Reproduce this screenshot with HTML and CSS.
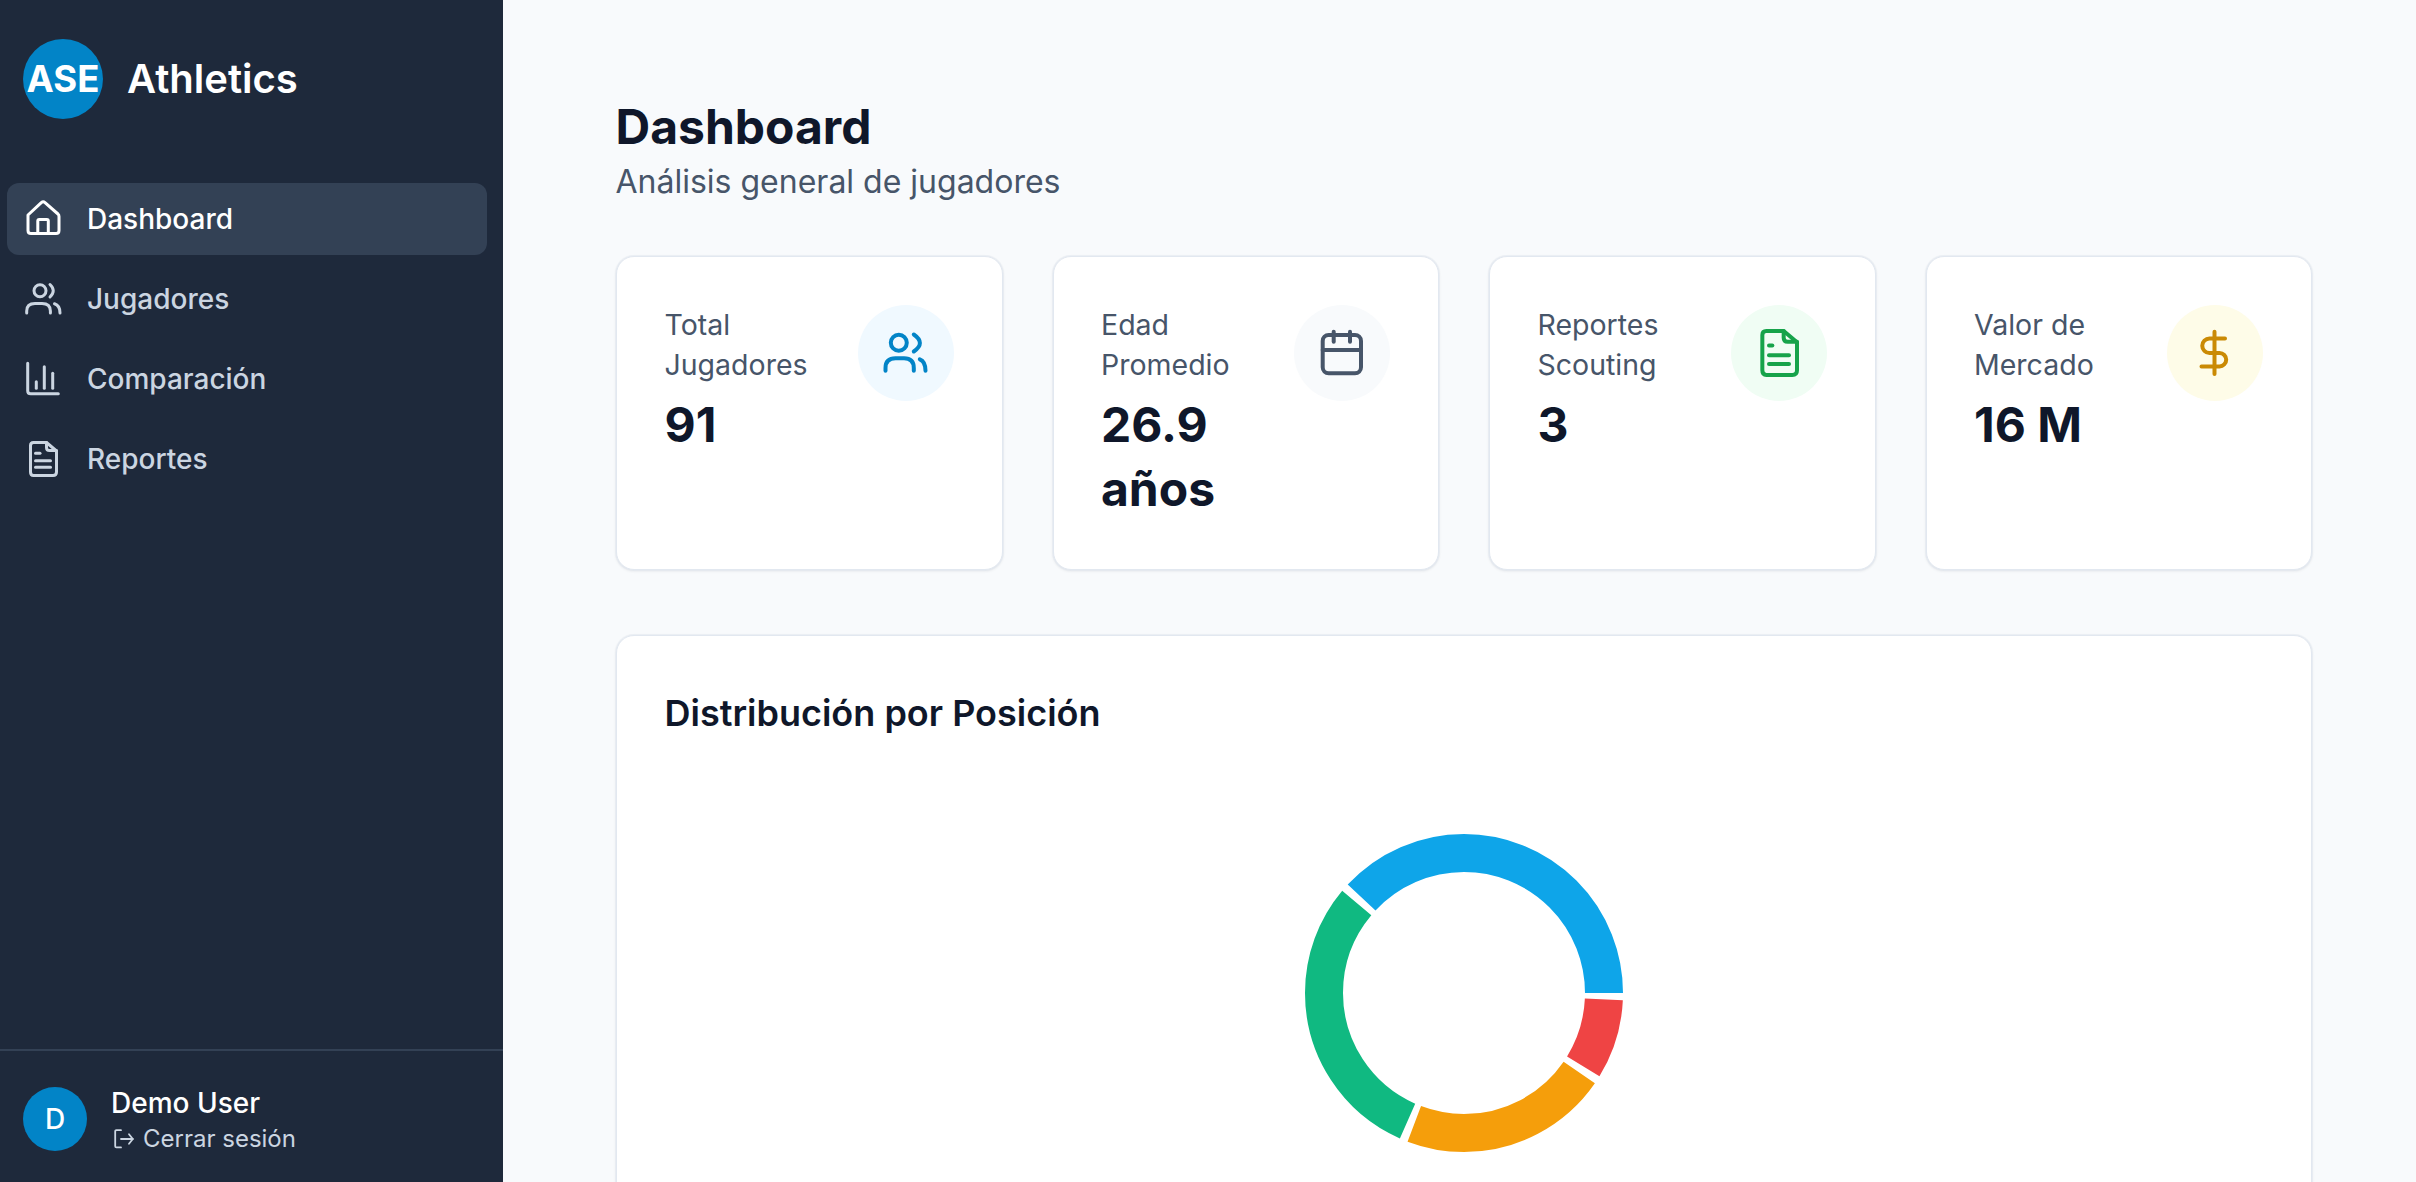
FILE: index.html
```html
<!DOCTYPE html>
<html lang="es">
<head>
<meta charset="utf-8">
<title>ASE Athletics</title>
<link rel="stylesheet" href="styles.css">
</head>
<body>
<div class="app">
  <aside class="sidebar">
    <div class="brand">
      <div class="brand-logo">ASE</div>
      <div class="brand-name">Athletics</div>
    </div>
    <nav class="nav">
      <a class="nav-item active">
        <svg class="nav-icon" viewBox="0 0 36 36"><path d="M3 14 L16.3 1.6 Q18.2 0 20 1.6 L33 13 Q34 14 34 15.5 V29.5 Q34 32.5 31 32.5 H6 Q3 32.5 3 29.5 Z"/><path d="M12.8 32.5 V20 Q12.8 18.5 14.3 18.5 H21.8 Q23.3 18.5 23.3 20 V32.5"/></svg>
        <span>Dashboard</span>
      </a>
      <a class="nav-item">
        <svg class="nav-icon" viewBox="0 0 36 36"><circle cx="15" cy="9.7" r="6"/><path d="M25 3.5 Q31.5 9.7 25 16"/><path d="M1.7 32 V30 Q1.7 22.5 10 22.5 H17 Q25.4 22.5 25.4 30 V32"/><path d="M29.5 22.8 Q35 24.5 35 32"/></svg>
        <span>Jugadores</span>
      </a>
      <a class="nav-item">
        <svg class="nav-icon" viewBox="0 0 36 36"><path d="M2.7 2.3 V29.7 Q2.7 32.7 5.7 32.7 H33.3"/><path d="M11.3 20.7 V27.3"/><path d="M19.3 5.7 V27.3"/><path d="M27.7 12.3 V27.3"/></svg>
        <span>Comparación</span>
      </a>
      <a class="nav-item">
        <svg class="nav-icon" viewBox="0 0 36 36"><path d="M8.5 1.5 H21.5 L31.5 10 V31 Q31.5 34.5 28 34.5 H8.5 Q5.5 34.5 5.5 31 V4.5 Q5.5 1.5 8.5 1.5 Z"/><path d="M21.5 1.5 V6.5 Q21.5 9.5 24.5 9.5 H31.5"/><path d="M10.5 12.3 H15"/><path d="M10.5 19.7 H25.5"/><path d="M10.5 26.3 H25.5"/></svg>
        <span>Reportes</span>
      </a>
    </nav>
    <div class="user">
      <div class="user-avatar">D</div>
      <div class="user-info">
        <div class="user-name">Demo User</div>
        <a class="logout">
          <svg class="logout-icon" viewBox="0 0 24 24"><path d="M10 3.2 H5.4 Q4.2 3.2 4.2 4.4 V19.2 Q4.2 20.4 5.4 20.4 H10"/><path d="M10 12 H21.8"/><path d="M18 7.2 L21.8 12 L18 16.8"/></svg>
          <span>Cerrar sesión</span>
        </a>
      </div>
    </div>
  </aside>
  <main class="main">
    <header class="page-head">
      <h1 class="page-title">Dashboard</h1>
      <p class="page-sub">Análisis general de jugadores</p>
    </header>
    <section class="stats">
      <article class="stat">
        <div class="stat-text">
          <div class="stat-label">Total Jugadores</div>
          <div class="stat-value">91</div>
        </div>
        <div class="stat-icon tone-blue">
          <svg viewBox="0 0 48 48"><circle cx="16.8" cy="13.7" r="8"/><path d="M31.8 5.5 Q44 14 31.8 22.5"/><path d="M3.5 41.7 V39 Q3.5 29.3 13.5 29.3 H22 Q31.8 29.3 31.8 39 V41.7"/><path d="M37.8 30.3 Q43.5 32.5 43.5 41.7"/></svg>
        </div>
      </article>
      <article class="stat">
        <div class="stat-text">
          <div class="stat-label">Edad Promedio</div>
          <div class="stat-value">26.9 años</div>
        </div>
        <div class="stat-icon tone-slate">
          <svg viewBox="0 0 48 48"><rect x="4.7" y="6" width="38.3" height="38.3" rx="6"/><path d="M4.7 21 H43"/><path d="M15.7 2.7 V12.7"/><path d="M32 2.7 V12.7"/></svg>
        </div>
      </article>
      <article class="stat">
        <div class="stat-text">
          <div class="stat-label">Reportes Scouting</div>
          <div class="stat-value">3</div>
        </div>
        <div class="stat-icon tone-green">
          <svg class="icon-doc" viewBox="0 0 36 36"><path d="M8.5 1.5 H21.5 L31.5 10 V31 Q31.5 34.5 28 34.5 H8.5 Q5.5 34.5 5.5 31 V4.5 Q5.5 1.5 8.5 1.5 Z"/><path d="M21.5 1.5 V6.5 Q21.5 9.5 24.5 9.5 H31.5"/><path d="M10.5 12.3 H13"/><path d="M10.5 19.7 H25.5"/><path d="M10.5 26.3 H25.5"/></svg>
        </div>
      </article>
      <article class="stat">
        <div class="stat-text">
          <div class="stat-label">Valor de Mercado</div>
          <div class="stat-value">16 M</div>
        </div>
        <div class="stat-icon tone-amber">
          <svg viewBox="0 0 48 48"><path d="M23.5 2.7 V45"/><path d="M34 9.5 H18.5 A7.2 7.2 0 0 0 18.5 24 H28.5 A6.7 6.7 0 0 1 28.5 37.4 H10.5"/></svg>
        </div>
      </article>
    </section>
    <section class="chart-card">
      <h2 class="chart-title">Distribución por Posición</h2>
      <svg class="donut" viewBox="0 0 320 320">
        <circle class="seg seg-blue" cx="160" cy="160" r="140" pathLength="360" stroke-dasharray="137 360" stroke-dashoffset="-223"/>
        <circle class="seg seg-green" cx="160" cy="160" r="140" pathLength="360" stroke-dasharray="106.2 360" stroke-dashoffset="-113.8"/>
        <circle class="seg seg-amber" cx="160" cy="160" r="140" pathLength="360" stroke-dasharray="76.2 360" stroke-dashoffset="-34.6"/>
        <circle class="seg seg-red" cx="160" cy="160" r="140" pathLength="360" stroke-dasharray="29 360" stroke-dashoffset="-2.6"/>
      </svg>
    </section>
  </main>
</div>
</body>
</html>
```

FILE: styles.css
```css
* { box-sizing: border-box; }
html, body { margin: 0; height: 100%; }
body {
  font-family: Inter, "Liberation Sans", sans-serif;
  background: #f8fafc;
  color: #0f172a;
  overflow: hidden;
}
.app { display: flex; height: 1182px; overflow: hidden; }

/* Sidebar */
.sidebar {
  width: 503px;
  flex: none;
  background: #1e293b;
  display: flex;
  flex-direction: column;
}
.brand {
  display: flex;
  align-items: center;
  gap: 24px;
  padding: 39px 23px 64px;
}
.brand-logo {
  width: 80px;
  height: 80px;
  border-radius: 50%;
  background: #0284c7;
  color: #fff;
  display: flex;
  align-items: center;
  justify-content: center;
  font-size: 36.5px;
  font-weight: 700;
}
.brand-name { color: #fff; font-size: 40px; font-weight: 600; line-height: 80px; height: 80px; }
.nav {
  flex: 1;
  display: flex;
  flex-direction: column;
  gap: 8px;
  padding: 0 16px 0 7px;
}
.nav-item {
  height: 72px;
  display: flex;
  align-items: center;
  gap: 26px;
  padding-left: 18px;
  border-radius: 12px;
  color: #cbd5e1;
  font-size: 28px;
  font-weight: 500;
}
.nav-item.active { background: #334155; color: #fff; }
.nav-icon {
  width: 36px;
  height: 36px;
  flex: none;
  overflow: visible;
  fill: none;
  stroke: currentColor;
  stroke-width: 3;
  stroke-linecap: round;
  stroke-linejoin: round;
}
.user {
  height: 133px;
  border-top: 2px solid #334155;
  display: flex;
  align-items: center;
  gap: 24px;
  padding: 4px 23px 0;
}
.user-avatar {
  width: 64px;
  height: 64px;
  border-radius: 50%;
  background: #0284c7;
  color: #fff;
  display: flex;
  align-items: center;
  justify-content: center;
  font-size: 28px;
  font-weight: 500;
}
.user-info { margin-top: 5px; }
.user-name { color: #fff; font-size: 28px; font-weight: 500; line-height: 36px; }
.logout {
  display: flex;
  align-items: center;
  gap: 8px;
  color: #cbd5e1;
  font-size: 24px;
  line-height: 36px;
}
.logout-icon {
  width: 24px;
  height: 24px;
  flex: none;
  fill: none;
  stroke: currentColor;
  stroke-width: 1.8;
  stroke-linecap: round;
  stroke-linejoin: round;
}

/* Main */
.main { flex: 1; min-width: 0; padding: 99px 104px 0 113px; }
.page-head { margin: 0 0 54px -0.5px; }
.page-title { margin: 0; font-size: 48px; font-weight: 700; line-height: 56px; color: #0f172a; }
.page-sub { margin: 7px 0 0; font-size: 32px; line-height: 40px; color: #475569; }
.stats {
  display: grid;
  grid-template-columns: repeat(4, 1fr);
  gap: 50px;
}
.stat {
  display: flex;
  justify-content: space-between;
  align-items: flex-start;
  gap: 16px;
  padding: 48px 48px 48px 47.5px;
  background: #fff;
  border: 1px solid #e2e8f0;
  border-radius: 18px;
  box-shadow: 0 0 0 1px rgba(226, 232, 240, .5), 0 1px 3px rgba(15, 23, 42, .1);
}
.stat-label { font-size: 28.5px; line-height: 40px; color: #475569; }
.stat-value { margin-top: 8px; font-size: 48px; font-weight: 700; line-height: 64px; color: #0f172a; }
.stat-icon {
  width: 96px;
  height: 96px;
  flex: none;
  border-radius: 50%;
  display: flex;
  align-items: center;
  justify-content: center;
}
.stat-icon svg {
  width: 48px;
  height: 48px;
  fill: none;
  stroke: currentColor;
  stroke-width: 4;
  stroke-linecap: round;
  stroke-linejoin: round;
}
.stat-icon .icon-doc { stroke-width: 3; }
.tone-blue { background: #f0f9ff; color: #0284c7; }
.tone-slate { background: #f8fafc; color: #475569; }
.tone-green { background: #f0fdf4; color: #16a34a; }
.tone-amber { background: #fefce8; color: #ca8a04; }
.chart-card {
  margin-top: 65px;
  padding: 49px 47.5px;
  min-height: 900px;
  background: #fff;
  border: 1px solid #e2e8f0;
  border-radius: 18px;
  box-shadow: 0 0 0 1px rgba(226, 232, 240, .5), 0 1px 3px rgba(15, 23, 42, .1);
}
.chart-title { margin: 0; font-size: 36px; font-weight: 600; line-height: 56px; color: #0f172a; }
.donut { display: block; width: 320px; height: 320px; margin: 92px auto 0; }
.seg { fill: none; stroke-width: 38; }
.seg-blue { stroke: #0ea5e9; }
.seg-green { stroke: #10b981; }
.seg-amber { stroke: #f59e0b; }
.seg-red { stroke: #ef4444; }
```
